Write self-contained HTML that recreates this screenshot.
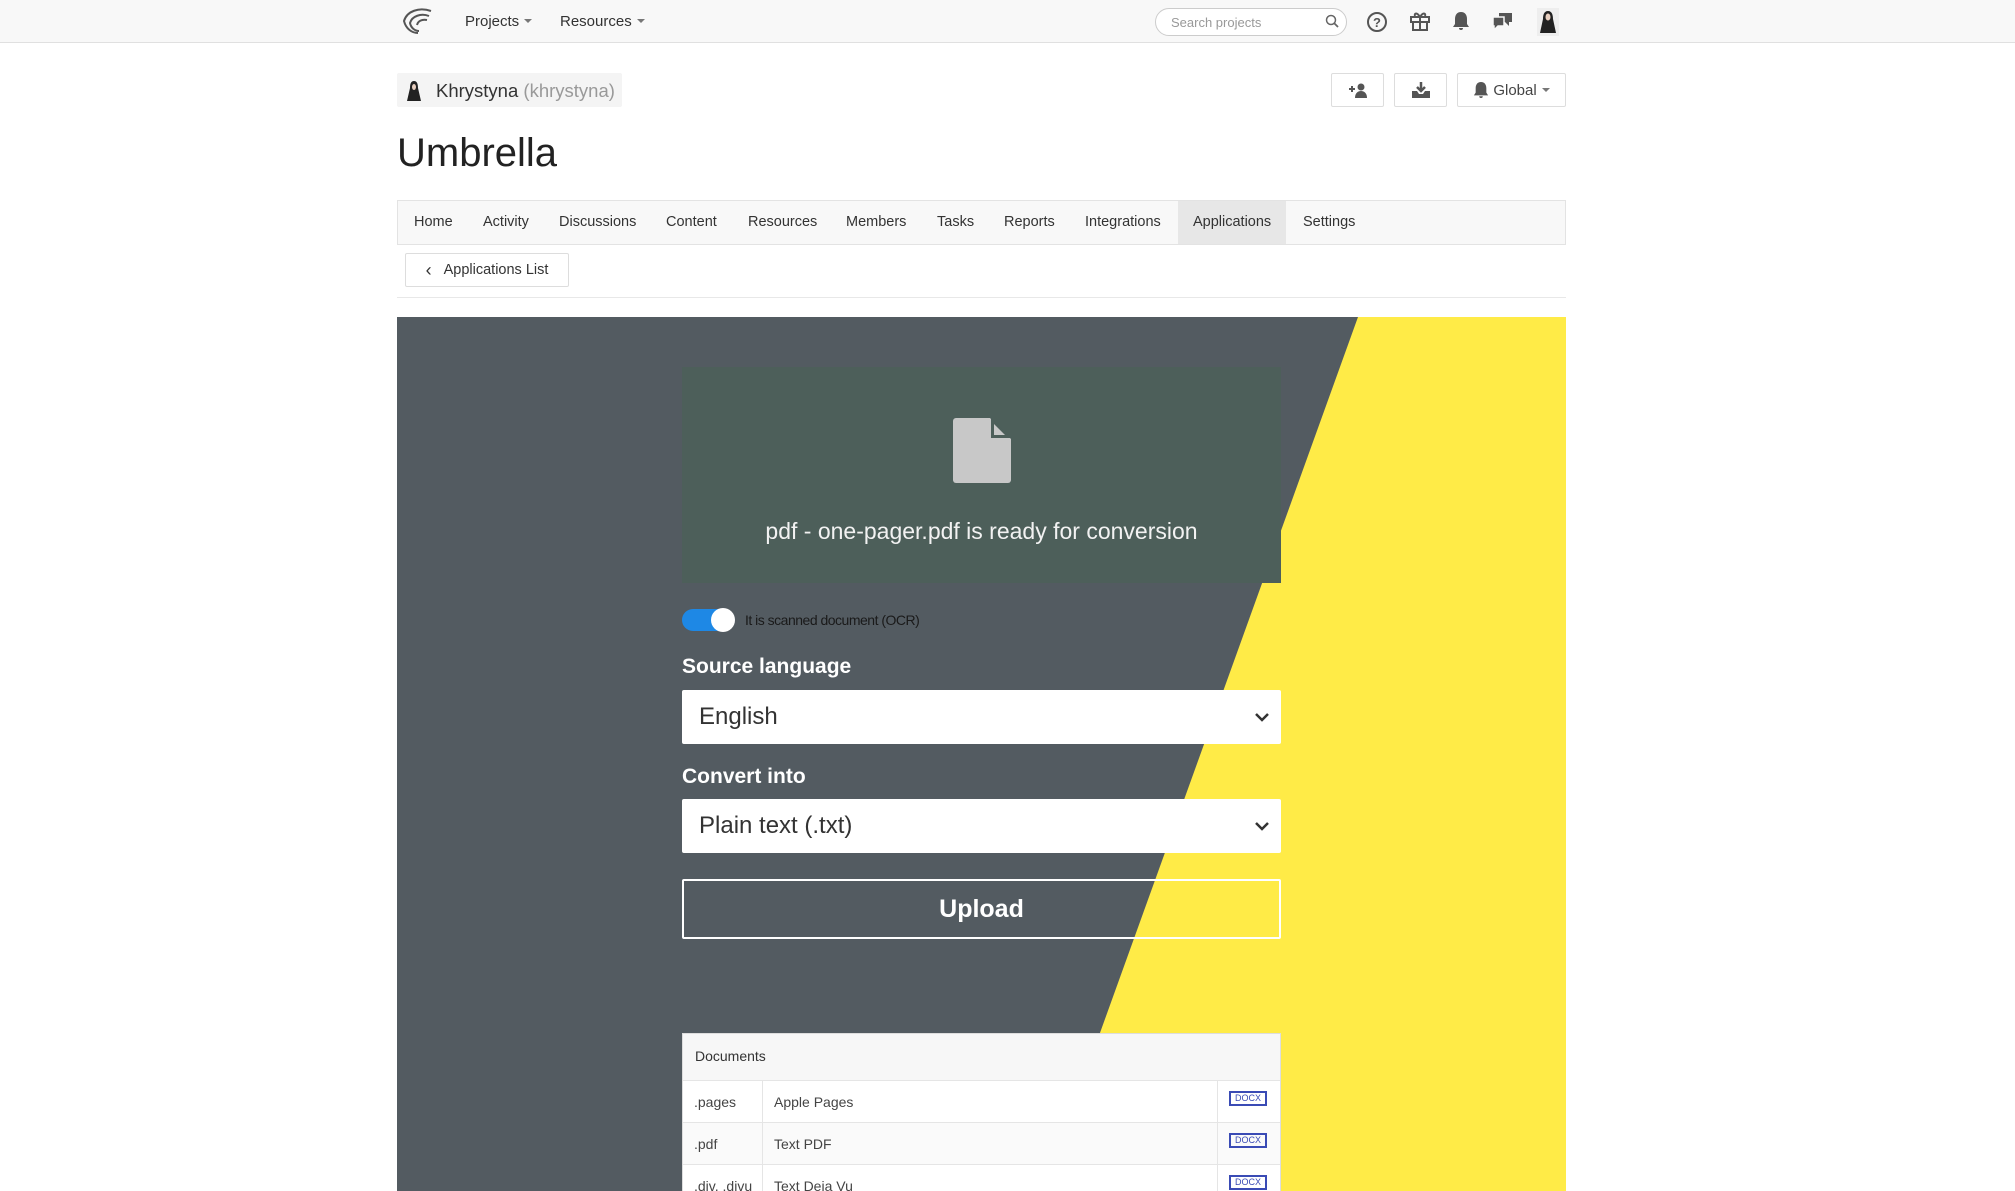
<!DOCTYPE html>
<html><head><meta charset="utf-8"><style>
*{box-sizing:border-box;margin:0;padding:0}
body{width:2015px;height:1191px;overflow:hidden;background:#fff;font-family:"Liberation Sans",sans-serif;color:#333;position:relative}
.abs{position:absolute}
.nav{left:0;top:0;width:2015px;height:43px;background:#f8f8f8;border-bottom:1px solid #e0e0e0}
.navt{font-size:15px;color:#333;top:13px}
.caret{display:inline-block;border-left:4px solid transparent;border-right:4px solid transparent;border-top:4px solid #777;margin-left:5px;vertical-align:3px}
.btn{border:1px solid #ddd;border-radius:2px;background:#fff;display:flex;align-items:center;justify-content:center;font-size:15px;color:#444}
.tab{top:214px;font-size:14.5px;color:#333}
.panel{left:397px;top:317px;width:1169px;height:874px;background:#535b61;overflow:hidden}
.sel{left:285px;width:599px;height:54px;background:#fff;border-radius:2px;font-size:24px;color:#333;padding-left:17px;display:flex;align-items:center}
.lbl{left:285px;font-size:21px;font-weight:bold;color:#fff}
.row{position:absolute;left:0;width:597px;height:42px;border-top:1px solid #e5e5e5;font-size:14px;color:#444}
.row span{position:absolute;top:13px}
.docx{position:absolute;left:546px;top:10px;width:38px;height:15px;border:2px solid #3a4bb5;font-size:9px;color:#3a4bb5;text-align:center;line-height:11px}
</style></head><body>
<div class="abs nav"></div>
<svg class="abs" style="left:401px;top:7px" width="34" height="28" viewBox="0 0 34 28"><g fill="none" stroke="#555" stroke-width="2"><path d="M30 4C18 0 6 4 3 14c2 8 8 12 14 12"/><path d="M28 9C20 6 11 9 9 16c1 5 5 8 9 8"/><path d="M26 13c-5-1-9 1-10 5"/></g></svg>
<div class="abs navt" style="left:465px">Projects<span class="caret"></span></div>
<div class="abs navt" style="left:560px">Resources<span class="caret"></span></div>
<div class="abs" style="left:1155px;top:8px;width:192px;height:28px;border:1px solid #ccc;border-radius:14px;background:#fff;font-size:13px;color:#999;padding:6px 0 0 15px">Search projects</div>
<svg class="abs" style="left:1325px;top:14px" width="14" height="14" viewBox="0 0 14 14"><circle cx="6" cy="6" r="4.5" fill="none" stroke="#666" stroke-width="1.5"/><path d="M9 9l4 4" stroke="#666" stroke-width="1.8"/></svg>
<svg class="abs" style="left:1366px;top:11px" width="22" height="22" viewBox="0 0 22 22"><circle cx="11" cy="11" r="9" fill="none" stroke="#555" stroke-width="2"/><text x="11" y="16" font-size="13" text-anchor="middle" fill="#555" font-family="Liberation Sans" font-weight="bold">?</text></svg>
<svg class="abs" style="left:1409px;top:10px" width="22" height="22" viewBox="0 0 22 22"><g fill="none" stroke="#555" stroke-width="2"><rect x="2" y="7" width="18" height="5"/><rect x="4" y="12" width="14" height="8"/><path d="M11 7v13M11 7C8 2 5 3 6 6M11 7c3-5 6-4 5-1"/></g></svg>
<svg class="abs" style="left:1452px;top:11px" width="18" height="20" viewBox="0 0 18 20"><path d="M9 1c4 0 6 3 6 7v5l2 3H1l2-3V8c0-4 2-7 6-7zM7 17h4a2 2 0 01-4 0z" fill="#555"/></svg>
<svg class="abs" style="left:1492px;top:11px" width="22" height="20" viewBox="0 0 22 20"><path d="M7 2h13v9h-3v4l-4-4H7z" fill="#555"/><path d="M1 6h11v9H6l-4 4v-4H1z" fill="#555" stroke="#f8f8f8" stroke-width="1.5"/></svg>
<svg class="abs" style="left:1537px;top:8px" width="22" height="28" viewBox="0 0 22 28"><rect width="22" height="28" fill="#eee"/><path d="M11 3c-4 0-5 4-5 8l-3 14h16l-3-14c0-4-1-8-5-8z" fill="#222"/><ellipse cx="11" cy="9" rx="2.5" ry="3.5" fill="#e8cfc0"/></svg>

<div class="abs" style="left:397px;top:73px;width:225px;height:34px;background:#f4f4f4;border-radius:2px"></div>
<svg class="abs" style="left:405px;top:79px" width="18" height="24" viewBox="0 0 18 24"><path d="M9 2c-3 0-4 3-4 7L2 22h14L13 9c0-4-1-7-4-7z" fill="#222"/><ellipse cx="9" cy="8" rx="2" ry="3" fill="#e8cfc0"/></svg>
<div class="abs" style="left:436px;top:80px;font-size:18.5px;color:#333">Khrystyna <span style="color:#999">(khrystyna)</span></div>
<div class="abs btn" style="left:1331px;top:73px;width:53px;height:34px"><svg width="20" height="16" viewBox="0 0 20 16"><path d="M1 7h6M4 4v6" stroke="#555" stroke-width="2"/><circle cx="13" cy="5" r="3.5" fill="#555"/><path d="M7 16c0-5 3-7 6-7s6 2 6 7z" fill="#555"/></svg></div>
<div class="abs btn" style="left:1394px;top:73px;width:53px;height:34px"><svg width="20" height="18" viewBox="0 0 20 18"><path d="M10 1v8M6 6l4 4 4-4" stroke="#555" stroke-width="2.5" fill="none"/><path d="M1 10h5l2 3h4l2-3h5v7H1z" fill="#555"/></svg></div>
<div class="abs btn" style="left:1457px;top:73px;width:109px;height:34px"><svg width="16" height="18" viewBox="0 0 18 20" style="margin-right:4px"><path d="M9 1c4 0 6 3 6 7v5l2 3H1l2-3V8c0-4 2-7 6-7zM7 17h4a2 2 0 01-4 0z" fill="#555"/></svg>Global<span class="caret"></span></div>

<div class="abs" style="left:397px;top:131px;font-size:40px;color:#222">Umbrella</div>

<div class="abs" style="left:397px;top:200px;width:1169px;height:45px;background:#f8f8f8;border:1px solid #e3e3e3"></div>
<div class="abs" style="left:1178px;top:201px;width:108px;height:43px;background:#e7e7e7"></div>
<div class="abs tab" style="left:414px">Home</div>
<div class="abs tab" style="left:483px">Activity</div>
<div class="abs tab" style="left:559px">Discussions</div>
<div class="abs tab" style="left:666px">Content</div>
<div class="abs tab" style="left:748px">Resources</div>
<div class="abs tab" style="left:846px">Members</div>
<div class="abs tab" style="left:937px">Tasks</div>
<div class="abs tab" style="left:1004px">Reports</div>
<div class="abs tab" style="left:1085px">Integrations</div>
<div class="abs tab" style="left:1193px">Applications</div>
<div class="abs tab" style="left:1303px">Settings</div>

<div class="abs btn" style="left:405px;top:253px;width:164px;height:34px;font-size:14.5px;color:#333"><span style="font-size:18px;margin-right:12px">‹</span>Applications List</div>
<div class="abs" style="left:397px;top:297px;width:1169px;height:1px;background:#e8e8e8"></div>

<div class="abs panel">
<svg class="abs" style="left:0;top:0" width="1169" height="874"><polygon points="961,0 1169,0 1169,874 646,874" fill="#ffeb47"/></svg>
<div class="abs" style="left:285px;top:50px;width:599px;height:216px;background:#4d5f5a"></div>
<svg class="abs" style="left:556px;top:101px" width="58" height="65" viewBox="0 0 58 65"><path d="M3 0h34l21 21v41a3 3 0 01-3 3H3a3 3 0 01-3-3V3a3 3 0 013-3z" fill="#c8c8c8"/><path d="M38 0v20h20z" fill="#4d5f5a"/><path d="M41 6v11h11z" fill="#c8c8c8"/></svg>
<div class="abs" style="left:285px;top:201px;width:599px;text-align:center;font-size:23px;color:#f2f2f2">pdf - one-pager.pdf is ready for conversion</div>
<div class="abs" style="left:285px;top:292px;width:52px;height:22px;border-radius:11px;background:#1e88e5"></div>
<div class="abs" style="left:314px;top:291px;width:24px;height:24px;border-radius:12px;background:#fff"></div>
<div class="abs" style="left:348px;top:295px;font-size:14px;color:#1a1a1a;letter-spacing:-0.5px">It is scanned document (OCR)</div>
<div class="abs lbl" style="top:338px">Source language</div>
<div class="abs sel" style="top:373px">English</div>
<svg class="abs" style="left:857px;top:394px" width="16" height="12" viewBox="0 0 16 12"><path d="M2 3l6 6 6-6" stroke="#333" stroke-width="2.5" fill="none"/></svg>
<div class="abs lbl" style="top:448px">Convert into</div>
<div class="abs sel" style="top:482px">Plain text (.txt)</div>
<svg class="abs" style="left:857px;top:503px" width="16" height="12" viewBox="0 0 16 12"><path d="M2 3l6 6 6-6" stroke="#333" stroke-width="2.5" fill="none"/></svg>
<div class="abs" style="left:285px;top:562px;width:599px;height:60px;border:2px solid #fff;border-radius:2px;color:#fff;font-size:25px;font-weight:bold;display:flex;align-items:center;justify-content:center">Upload</div>
<div class="abs" style="left:285px;top:716px;width:599px;height:170px;background:#fff;border:1px solid #ddd;overflow:hidden">
<div class="abs" style="left:0;top:0;width:597px;height:46px;background:#f7f7f7;font-size:14px;color:#333;padding:14px 0 0 12px">Documents</div>
<div class="row" style="top:46px"><span style="left:11px">.pages</span><span style="left:91px">Apple Pages</span><div class="docx">DOCX</div></div>
<div class="row" style="top:88px;background:#fafafa"><span style="left:11px">.pdf</span><span style="left:91px">Text PDF</span><div class="docx">DOCX</div></div>
<div class="row" style="top:130px"><span style="left:11px">.djv, .djvu</span><span style="left:91px">Text Deja Vu</span><div class="docx">DOCX</div></div>
<div class="abs" style="left:79px;top:46px;width:1px;height:130px;background:#e5e5e5"></div>
<div class="abs" style="left:534px;top:46px;width:1px;height:130px;background:#e5e5e5"></div>
</div>
</div>
</body></html>
